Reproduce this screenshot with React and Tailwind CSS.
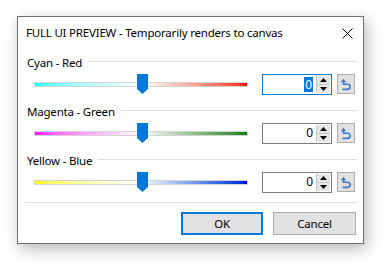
import React from "react";

const font = { fontFamily: '"Noto Sans", "Segoe UI", sans-serif' };

function Thumb() {
  return (
    <svg width="11" height="20" viewBox="0 0 11 20" className="absolute left-[103px] top-[0px]">
      <polygon points="0,0 11,0 11,15 5.5,20 0,15" fill="#0078d7" />
    </svg>
  );
}

function ResetIcon() {
  return (
    <svg width="14" height="14" viewBox="0 0 14 14">
      <path d="M4.5 4 V7.2 H8.5 A2.6 2.6 0 0 1 8.5 12.4 H3.5" fill="none" stroke="#3e7cc4" strokeWidth="1.6" />
      <polygon points="1.8,5.2 4.5,1.8 7.2,5.2" fill="#3e7cc4" />
    </svg>
  );
}

function Spinner() {
  return (
    <div className="flex flex-col w-[14px] h-full border-l border-[#c8c8c8]">
      <div className="flex-1 flex items-center justify-center bg-[#e6e6e6] border-b border-[#c8c8c8]">
        <svg width="7" height="4" viewBox="0 0 7 4"><polygon points="0,4 3.5,0 7,4" fill="#000" /></svg>
      </div>
      <div className="flex-1 flex items-center justify-center bg-[#e6e6e6]">
        <svg width="7" height="4" viewBox="0 0 7 4"><polygon points="0,0 7,0 3.5,4" fill="#000" /></svg>
      </div>
    </div>
  );
}

function Group({ label, from, via, to, focused }) {
  return (
    <div className="flex flex-col mb-[9px]">
      <div className="flex items-center h-[16px]">
        <span className="text-[11.5px] tracking-[-0.2px] text-[#000] leading-none whitespace-nowrap">{label}</span>
        <div className="flex-1 h-px bg-[#dadde1] ml-[6px] mt-[-3px]" />
      </div>
      <div className="flex items-center h-[22px] mt-[2px]">
        <div className="relative w-[214px] h-[20px] ml-[7px] flex items-center">
          <div className={`w-full h-[5px] border border-[#d4d4d4] bg-linear-to-r ${from} ${via} ${to}`} />
          <Thumb />
        </div>
        <div
          className={`ml-[14px] w-[70px] h-[21px] flex items-stretch p-px ${focused ? "border border-[#0078d7]" : "border border-[#7a7a7a]"}`}
        >
          <div className="flex-1 flex items-center justify-end pr-[3px]">
            {focused ? (
              <span className="bg-[#0078d7] text-white text-[12px] leading-[15px] px-px">0</span>
            ) : (
              <span className="text-[12px] leading-none text-black">0</span>
            )}
          </div>
          <Spinner />
        </div>
        <div className="ml-[5px] w-[18px] h-[20px] bg-[#e1e1e1] border border-[#adadad] flex items-center justify-center">
          <ResetIcon />
        </div>
      </div>
    </div>
  );
}

export default function App() {
  return (
    <div className="w-[385px] h-[266px] bg-white overflow-hidden" style={font}>
      <div className="ml-[17px] mt-[16px] w-[347px] h-[228px] bg-white border border-[#6e6e6e] shadow-[3px_5px_14px_rgba(0,0,0,0.28)] flex flex-col">
        <div className="h-[32px] flex items-center pl-[8px] pr-[10px]">
          <span className="text-[11.5px] tracking-[-0.2px] text-black leading-none">FULL UI PREVIEW - Temporarily renders to canvas</span>
          <div className="flex-1" />
          <svg width="11" height="11" viewBox="0 0 11 11">
            <path d="M0.5 0.5 L10.5 10.5 M10.5 0.5 L0.5 10.5" stroke="#000" strokeWidth="1" />
          </svg>
        </div>
        <div className="pl-[9px] pr-[6px] pt-[6px] flex flex-col">
          <Group label="Cyan - Red" from="from-[#00ffff]" via="via-white" to="to-[#ff0000]" focused />
          <Group label="Magenta - Green" from="from-[#ff00ff]" via="via-white" to="to-[#008000]" />
          <Group label="Yellow - Blue" from="from-[#ffff00]" via="via-white" to="to-[#0000d0]" />
          <div className="h-px bg-[#dadde1] ml-[-2px]" />
          <div className="flex justify-end mt-[9px] pr-[1px] gap-[10px]">
            <div className="w-[82px] h-[23px] bg-[#e1e1e1] border-2 border-[#0078d7] flex items-center justify-center text-[11.5px] tracking-[-0.2px] text-black">OK</div>
            <div className="w-[83px] h-[23px] bg-[#e1e1e1] border border-[#adadad] flex items-center justify-center text-[11.5px] tracking-[-0.2px] text-black">Cancel</div>
          </div>
        </div>
      </div>
    </div>
  );
}
